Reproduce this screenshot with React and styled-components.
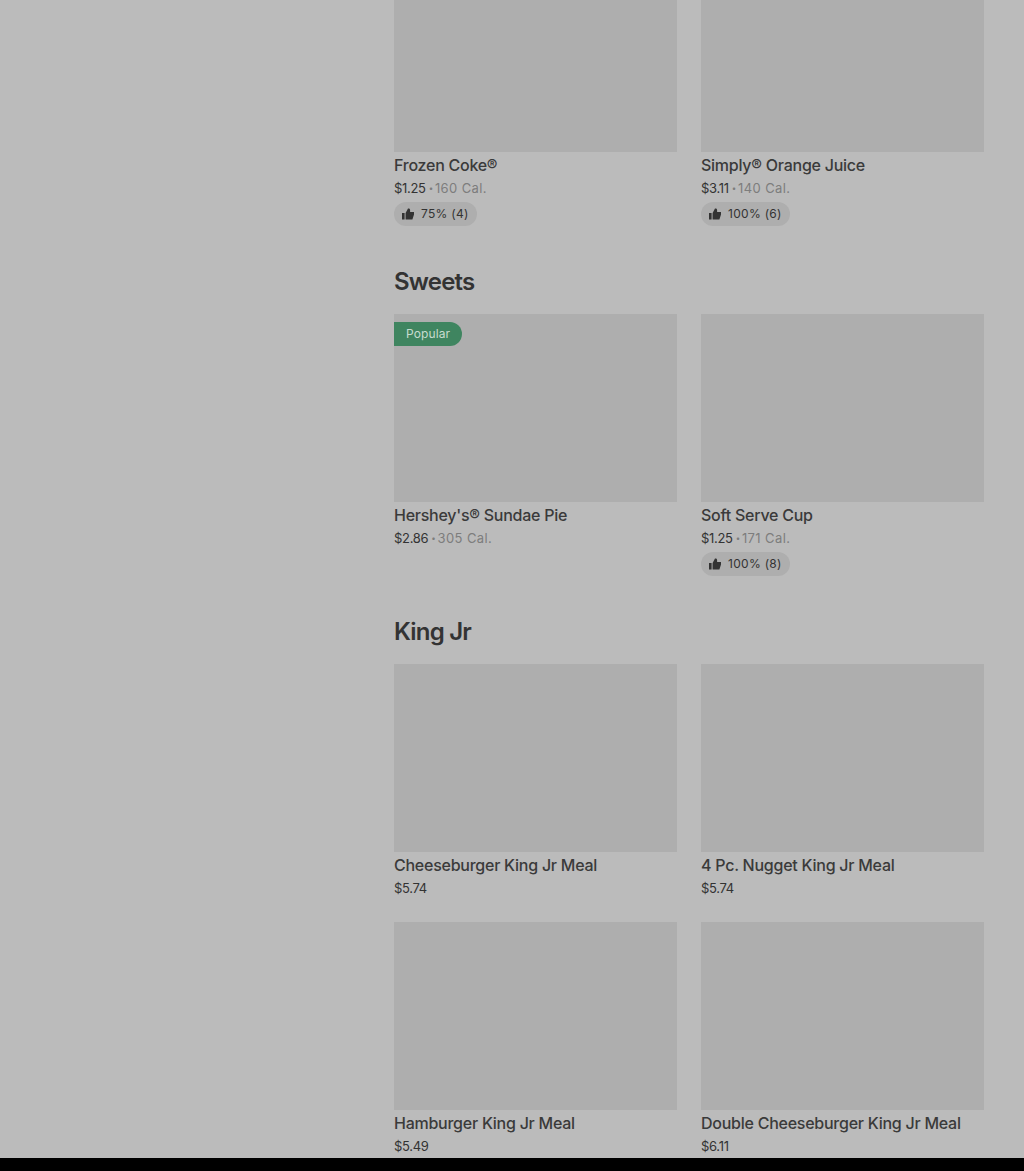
import styled, { createGlobalStyle } from "styled-components";

const GlobalStyle = createGlobalStyle`
  html, body {
    margin: 0;
    padding: 0;
    background: #000;
  }
  body {
    font-family: Inter, "Liberation Sans", sans-serif;
  }
`;

const sections = [
  {
    items: [
      { name: "Frozen Coke®", price: "$1.25", cal: "160 Cal.", rating: "75% (4)" },
      { name: "Simply® Orange Juice", price: "$3.11", cal: "140 Cal.", rating: "100% (6)" },
    ],
  },
  {
    title: "Sweets",
    items: [
      { name: "Hershey's® Sundae Pie", price: "$2.86", cal: "305 Cal.", popular: true },
      { name: "Soft Serve Cup", price: "$1.25", cal: "171 Cal.", rating: "100% (8)" },
    ],
  },
  {
    title: "King Jr",
    items: [
      { name: "Cheeseburger King Jr Meal", price: "$5.74" },
      { name: "4 Pc. Nugget King Jr Meal", price: "$5.74" },
      { name: "Hamburger King Jr Meal", price: "$5.49" },
      { name: "Double Cheeseburger King Jr Meal", price: "$6.11" },
    ],
  },
];

const ThumbIcon = () => (
  <svg width="12" height="12" viewBox="0 0 12 12" fill="#333">
    <path d="M0 5h2.6v6.5H0zM3.6 5 6 .5h.6c.9 0 1.5.7 1.5 1.6V4H12v2.4l-1.6 5.1H3.6z" />
  </svg>
);

const MenuItem = ({ item }) => (
  <Card>
    <Photo>{item.popular && <Badge>Popular</Badge>}</Photo>
    <Name>{item.name}</Name>
    <PriceLine>
      {item.price}
      {item.cal && <Dot>•</Dot>}
      {item.cal && <Calories>{item.cal}</Calories>}
    </PriceLine>
    {item.rating && (
      <Rating>
        <ThumbIcon />
        <span>{item.rating}</span>
      </Rating>
    )}
  </Card>
);

const App = () => (
  <>
    <GlobalStyle />
    <Page>
      <Menu>
        {sections.map((section, i) => (
          <Section key={i}>
            {section.title && <Heading>{section.title}</Heading>}
            <Grid>
              {section.items.map((item) => (
                <MenuItem key={item.name} item={item} />
              ))}
            </Grid>
          </Section>
        ))}
      </Menu>
    </Page>
  </>
);

const Page = styled.main`
  height: 1158px;
  overflow: hidden;
  background: #bbbbbb;
  padding-left: 394px;
  padding-right: 40px;
`;

const Menu = styled.div`
  margin-top: -36px;
  display: flex;
  flex-direction: column;
  gap: 36px;
`;

const Section = styled.section`
  display: flex;
  flex-direction: column;
`;

const Heading = styled.h2`
  margin: 0 0 12px;
  height: 40px;
  line-height: 40px;
  font-size: 24px;
  font-weight: 600;
  letter-spacing: -0.8px;
  color: #333;
`;

const Grid = styled.div`
  display: grid;
  grid-template-columns: 283px 283px;
  column-gap: 24px;
  row-gap: 24px;
`;

const Card = styled.article`
  display: flex;
  flex-direction: column;
  align-items: flex-start;
  min-height: 234px;
`;

const Photo = styled.div`
  position: relative;
  width: 100%;
  height: 188px;
  background: #aeaeae;
`;

const Badge = styled.span`
  position: absolute;
  top: 8px;
  left: 0;
  height: 24px;
  line-height: 24px;
  padding: 0 12px;
  border-radius: 0 12px 12px 0;
  background: #3f8560;
  color: #c7dccf;
  font-size: 12px;
  letter-spacing: 0.1px;
`;

const Name = styled.div`
  margin-top: 1px;
  height: 24px;
  line-height: 24px;
  font-size: 16px;
  font-weight: 500;
  letter-spacing: -0.25px;
  color: #3a3a3a;
`;

const PriceLine = styled.div`
  display: flex;
  align-items: center;
  height: 20px;
  margin-top: 1px;
  font-size: 13px;
  color: #333;
  letter-spacing: -0.3px;
`;

const Dot = styled.span`
  margin: 0 2px 0 3px;
  font-size: 8px;
  color: #7d7d7d;
`;

const Calories = styled.span`
  color: #7d7d7d;
  letter-spacing: 0.4px;
`;

const Rating = styled.div`
  display: flex;
  align-items: center;
  gap: 7px;
  margin-top: 4px;
  height: 24px;
  padding: 0 8px;
  border-radius: 12px;
  background: #aeaeae;
  font-size: 12px;
  font-weight: 400;
  letter-spacing: 0.3px;
  color: #333;

  span {
    position: relative;
    top: -1px;
  }
`;

export default App;
